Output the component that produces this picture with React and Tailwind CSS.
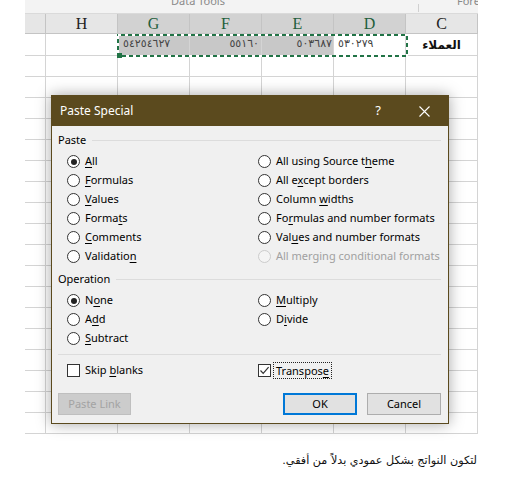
import React from "react";

const cols = ["H", "G", "F", "E", "D", "C"];
const selected = ["G", "F", "E", "D"];

function Key({ text, at }) {
  if (at < 0) return <>{text}</>;
  return (
    <>
      {text.slice(0, at)}
      <span className="underline decoration-1 underline-offset-[2px]">{text[at]}</span>
      {text.slice(at + 1)}
    </>
  );
}

function Radio({ checked, disabled }) {
  return (
    <span
      className={`flex h-[13px] w-[13px] shrink-0 items-center justify-center rounded-full border ${
        disabled ? "border-[#cccccc] bg-[#f4f4f4]" : "border-[#333333] bg-white"
      }`}
    >
      {checked && <span className="h-[6px] w-[6px] rounded-full bg-[#222222]" />}
    </span>
  );
}

function Option({ text, at, checked, disabled }) {
  return (
    <div className="flex h-[19px] items-center gap-[5px] whitespace-nowrap">
      <Radio checked={checked} disabled={disabled} />
      <span className={disabled ? "text-[#a0a0a0]" : "text-black"}>
        <Key text={text} at={at} />
      </span>
    </div>
  );
}

function Check({ checked }) {
  return (
    <span className="flex h-[13px] w-[13px] shrink-0 items-center justify-center border border-[#333333] bg-white">
      {checked && (
        <svg width="11" height="11" viewBox="0 0 11 11">
          <path d="M1.5 5.5 L4.2 8.3 L9.6 2.2" fill="none" stroke="#333" strokeWidth="1.2" />
        </svg>
      )}
    </span>
  );
}

function GroupHead({ label }) {
  return (
    <div className="flex h-[14px] items-center">
      <span className="text-black">{label}</span>
      <span className="ml-[6px] mt-[1px] flex-1 border-t border-[#dcdcdc]" />
    </div>
  );
}

function Row({ h, children }) {
  return (
    <div className={`grid grid-cols-[21px_repeat(6,72px)] ${h}`}>{children}</div>
  );
}

const num = "font-['DejaVu_Sans',sans-serif] text-[11px] tracking-[2px] text-[#444444]";

export default function App() {
  const rows = Array.from({ length: 18 });

  return (
    <div className="relative h-[486px] w-[510px] overflow-hidden bg-white font-['Noto_Sans',sans-serif] text-[11px]">
      <div className="ml-[25px] w-[453px]">
        {/* ribbon strip, mostly cut off */}
        <div className="flex h-[14px] items-end overflow-hidden border-b border-[#dadada] bg-[#f3f3f3] text-[11px] leading-[14px] text-[#8a8a8a]">
          <span className="ml-[146px] mb-[5px] whitespace-nowrap">Data Tools</span>
          <span className="ml-[193px] mb-[1px] h-[8px] border-l border-[#d0d0d0]" />
          <span className="ml-[38px] mb-[5px]">Forec</span>
        </div>

        {/* column headers */}
        <Row h="h-[20px]">
          <div className="border-r border-b border-[#c4c4c4] bg-[#e6e6e6]" />
          {cols.map((c) => {
            const sel = selected.includes(c);
            return (
              <div
                key={c}
                className={`flex items-center justify-center border-r border-b border-[#c4c4c4] font-['Liberation_Serif',serif] text-[16px] leading-none ${
                  sel ? "bg-[#d2d2d2] text-[#1f5f3c]" : "bg-[#e6e6e6] text-[#222222]"
                }`}
              >
                {c}
              </div>
            );
          })}
        </Row>

        {/* first data row */}
        <Row h="h-[22px]">
          <div className="border-r border-b border-[#d4d4d4]" />
          <div className="border-r border-b border-[#d4d4d4]" />
          <div className={`flex items-center border-r border-b border-[#d4d4d4] bg-[#c8c8c8] pl-[5px] ${num}`}>
            ٥٤٢٥٤٦٢٧
          </div>
          <div className={`flex items-center justify-end border-r border-b border-[#d4d4d4] bg-[#c8c8c8] pr-[2px] ${num}`}>
            ٥٥١٦٠
          </div>
          <div className={`flex items-center justify-end border-r border-b border-[#d4d4d4] bg-[#c8c8c8] pr-[1px] ${num}`}>
            ٥٠٣٦٨٧
          </div>
          <div className={`flex items-center border-r border-b border-[#d4d4d4] bg-white pl-[4px] ${num}`}>
            ٥٣٠٢٧٩
          </div>
          <div
            dir="rtl"
            className="flex items-center justify-center border-r border-b border-[#d4d4d4] font-['DejaVu_Sans',sans-serif] text-[12px] font-bold text-[#111111]"
          >
            العملاء
          </div>
        </Row>

        {rows.map((_, i) => (
          <Row key={i} h="h-[21px]">
            <div className="border-r border-b border-[#d4d4d4]" />
            {cols.map((c) => (
              <div key={c} className="border-r border-b border-[#d4d4d4]" />
            ))}
          </Row>
        ))}
      </div>

      {/* copy marquee around G1:D1 */}
      <svg className="absolute left-[117px] top-[34px]" width="291" height="24" viewBox="0 0 291 24">
        <rect x="1" y="1" width="289" height="21" fill="none" stroke="#217346" strokeWidth="2" />
        <rect x="1" y="1" width="289" height="21" fill="none" stroke="#ffffff" strokeWidth="2" strokeDasharray="3 4" />
        <rect x="0" y="19" width="5" height="5" fill="#217346" />
      </svg>

      {/* caption */}
      <p
        dir="rtl"
        className="mt-[19px] pr-[33px] font-['DejaVu_Sans',sans-serif] text-[11.2px] leading-[16px] text-[#111111]"
      >
        لتكون النواتج بشكل عمودي بدلاً من أفقي.
      </p>

      {/* Paste Special dialog */}
      <div className="absolute left-[51px] top-[95px] flex h-[329px] w-[398px] flex-col border border-[#5b4a1e] bg-[#f0f0f0] shadow-[0_0_14px_rgba(0,0,0,0.35)]">
        <div className="flex h-[30px] shrink-0 items-center bg-[#5b4a1e] pl-[8px] text-[12px] text-white">
          <span>Paste Special</span>
          <span className="ml-auto mr-[38px] text-[13px]">?</span>
          <svg className="mr-[18px]" width="11" height="11" viewBox="0 0 11 11">
            <path d="M0.5 0.5 L10.5 10.5 M10.5 0.5 L0.5 10.5" stroke="#fff" strokeWidth="1.1" />
          </svg>
        </div>

        <div className="flex flex-1 flex-col pl-[6px] pr-[7px] pt-[7px]">
          <GroupHead label="Paste" />
          <div className="mt-[5px] grid grid-cols-[191px_1fr] pl-[9px]">
            <div>
              <Option text="All" at={0} checked />
              <Option text="Formulas" at={0} />
              <Option text="Values" at={0} />
              <Option text="Formats" at={5} />
              <Option text="Comments" at={0} />
              <Option text="Validation" at={9} />
            </div>
            <div>
              <Option text="All using Source theme" at={18} />
              <Option text="All except borders" at={5} />
              <Option text="Column widths" at={7} />
              <Option text="Formulas and number formats" at={2} />
              <Option text="Values and number formats" at={3} />
              <Option text="All merging conditional formats" at={-1} disabled />
            </div>
          </div>

          <div className="mt-[6px]">
            <GroupHead label="Operation" />
          </div>
          <div className="mt-[5px] grid grid-cols-[191px_1fr] pl-[9px]">
            <div>
              <Option text="None" at={1} checked />
              <Option text="Add" at={1} />
              <Option text="Subtract" at={0} />
            </div>
            <div>
              <Option text="Multiply" at={0} />
              <Option text="Divide" at={1} />
            </div>
          </div>

          <div className="mt-[6px] border-t border-[#dcdcdc]" />

          <div className="mt-[6px] grid h-[19px] grid-cols-[191px_1fr] pl-[9px]">
            <div className="flex items-center gap-[5px]">
              <Check />
              <span className="text-black">
                <Key text="Skip blanks" at={5} />
              </span>
            </div>
            <div className="flex items-center gap-[2px]">
              <Check checked />
              <span className="border border-dotted border-[#222222] px-[2px] leading-[15px] text-black">
                <Key text="Transpose" at={8} />
              </span>
            </div>
          </div>

          <div className="mt-[13px] flex items-center">
            <button className="h-[22px] w-[73px] border border-[#bfbfbf] bg-[#cccccc] text-[11px] text-[#a3a3a3]">
              Paste Link
            </button>
            <button className="ml-auto h-[22px] w-[74px] border-2 border-[#0078d7] bg-[#e1e1e1] text-[11px] text-black">
              OK
            </button>
            <button className="ml-[10px] h-[22px] w-[74px] border border-[#adadad] bg-[#e1e1e1] text-[11px] text-black">
              Cancel
            </button>
          </div>
        </div>
      </div>
    </div>
  );
}
